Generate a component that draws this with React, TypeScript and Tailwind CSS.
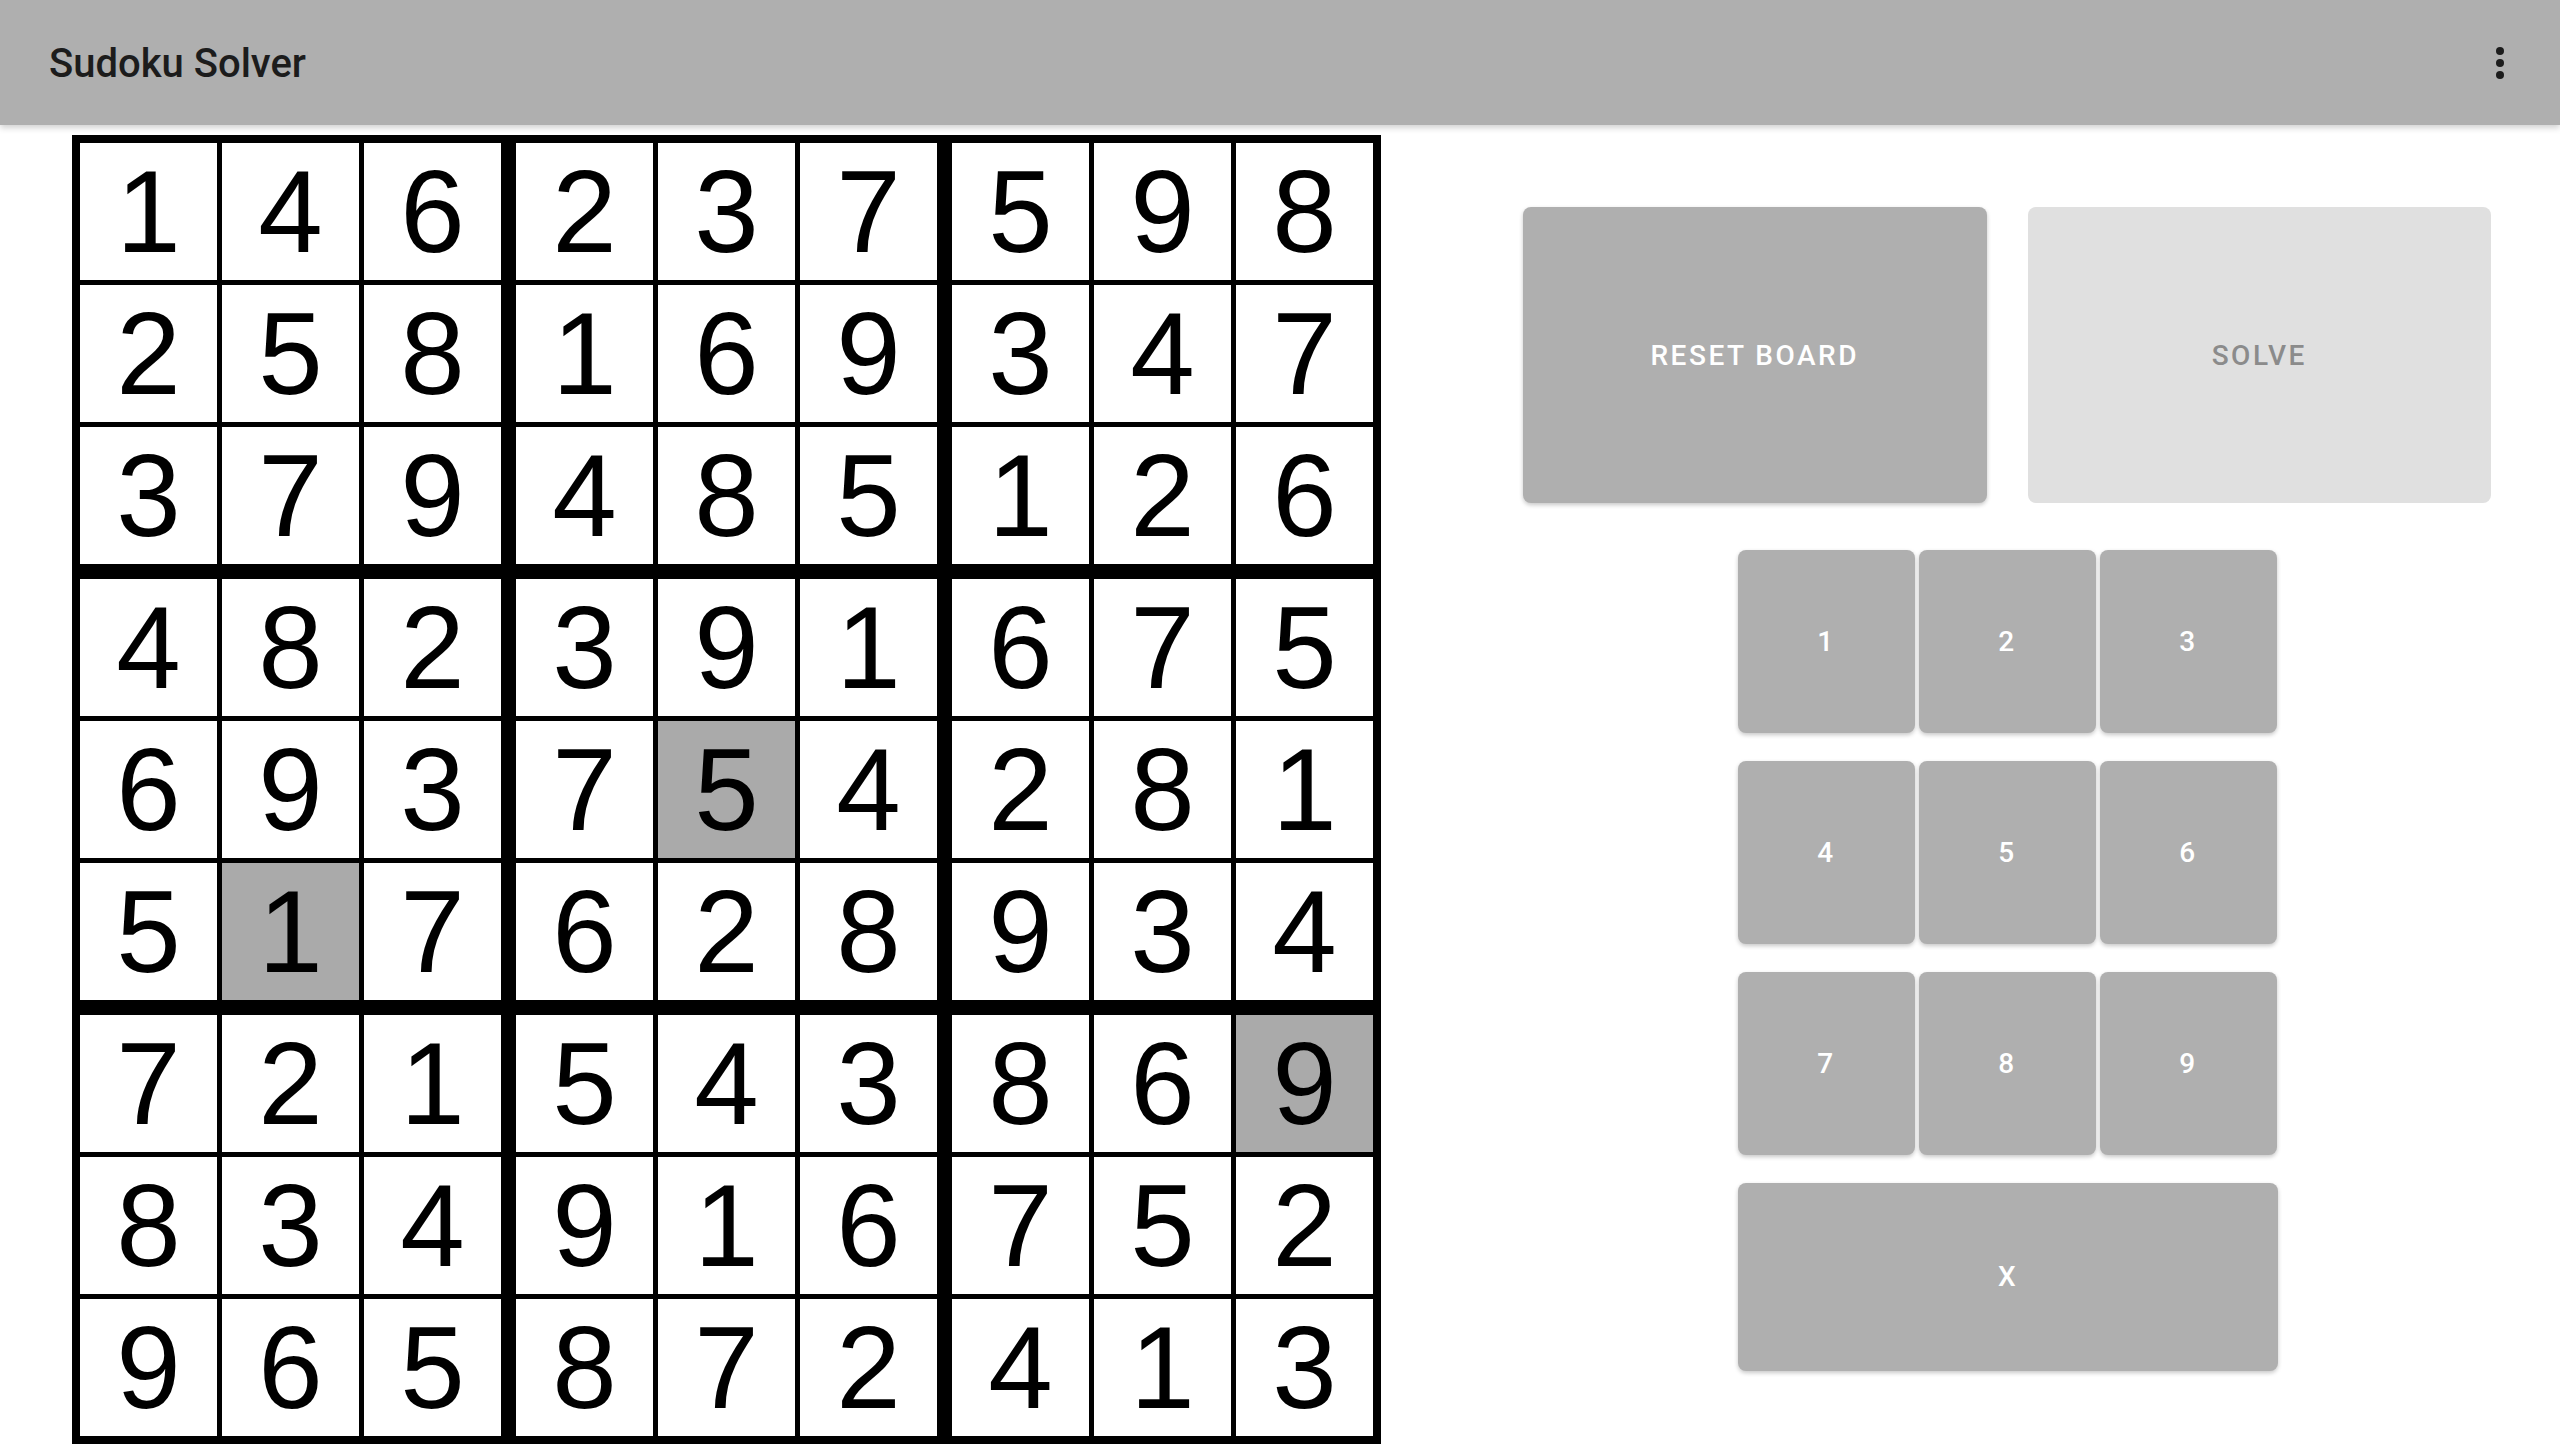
import React from "react";

const board = [
  [1, 4, 6, 2, 3, 7, 5, 9, 8],
  [2, 5, 8, 1, 6, 9, 3, 4, 7],
  [3, 7, 9, 4, 8, 5, 1, 2, 6],
  [4, 8, 2, 3, 9, 1, 6, 7, 5],
  [6, 9, 3, 7, 5, 4, 2, 8, 1],
  [5, 1, 7, 6, 2, 8, 9, 3, 4],
  [7, 2, 1, 5, 4, 3, 8, 6, 9],
  [8, 3, 4, 9, 1, 6, 7, 5, 2],
  [9, 6, 5, 8, 7, 2, 4, 1, 3],
];

const highlighted = ["4-4", "5-1", "6-8"];

const TopBar = () => (
  <div className="relative z-10 flex h-[125px] items-center justify-between bg-[#afafaf] pl-[49px] pr-[36px] shadow-[0_3px_6px_rgba(0,0,0,0.18)]">
    <h1 className="pt-[2px] text-[40px] font-medium text-[#1c1c1c]" style={{ fontFamily: "Roboto, sans-serif" }}>
      Sudoku Solver
    </h1>
    <svg width="48" height="48" viewBox="0 0 48 48" fill="#1c1c1c">
      <circle cx="24" cy="12" r="4" />
      <circle cx="24" cy="24" r="4" />
      <circle cx="24" cy="36" r="4" />
    </svg>
  </div>
);

const Box = ({ br, bc }: { br: number; bc: number }) => (
  <div className="grid grid-cols-3 gap-[5px]">
    {[0, 1, 2].map((r) =>
      [0, 1, 2].map((c) => {
        const row = br * 3 + r;
        const col = bc * 3 + c;
        const hl = highlighted.includes(`${row}-${col}`);
        return (
          <div
            key={`${r}-${c}`}
            className={`flex h-[137px] w-[137px] items-center justify-center text-[116px] leading-none text-black ${
              hl ? "bg-[#aaaaaa]" : "bg-white"
            }`}
            style={{ fontFamily: '"Liberation Sans", Arial, sans-serif' }}
          >
            {board[row][col]}
          </div>
        );
      })
    )}
  </div>
);

const Board = () => (
  <div className="grid grid-cols-3 gap-[15px] bg-black p-[8px]">
    {[0, 1, 2].map((br) => [0, 1, 2].map((bc) => <Box key={`${br}-${bc}`} br={br} bc={bc} />))}
  </div>
);

const Key = ({ label, wide }: { label: string; wide?: boolean }) => (
  <button
    className={`flex items-center justify-center rounded-[8px] bg-[#afafaf] text-[28px] font-medium tracking-[2.5px] text-white shadow-[0_2px_4px_rgba(0,0,0,0.22)] ${
      wide ? "h-[188px] w-[540px]" : "h-[183px] w-[177px]"
    }`}
  >
    {label}
  </button>
);

export default function App() {
  return (
    <div className="h-[1446px] w-[2560px] overflow-hidden bg-white" style={{ fontFamily: "Roboto, sans-serif" }}>
      <TopBar />
      <div className="flex">
        <div className="ml-[72px] mt-[10px]">
          <Board />
        </div>
        <div className="ml-[142px] mt-[82px] flex w-[968px] flex-col">
          <div className="flex gap-[41px]">
            <button className="flex h-[296px] w-[464px] items-center justify-center rounded-[8px] bg-[#afafaf] pt-[2px] text-[28px] font-medium tracking-[2.5px] text-white shadow-[0_2px_4px_rgba(0,0,0,0.22)]">
              RESET BOARD
            </button>
            <button className="flex h-[296px] w-[464px] items-center justify-center rounded-[8px] bg-[#e0e0e0] pt-[2px] text-[28px] font-medium tracking-[2.5px] text-[#8b8b8b]">
              SOLVE
            </button>
          </div>
          <div className="ml-[215px] mt-[47px] flex w-[540px] flex-col gap-[28px]">
            {[
              ["1", "2", "3"],
              ["4", "5", "6"],
              ["7", "8", "9"],
            ].map((row) => (
              <div key={row[0]} className="flex gap-[4px]">
                {row.map((n) => (
                  <Key key={n} label={n} />
                ))}
              </div>
            ))}
            <Key label="X" wide />
          </div>
        </div>
      </div>
    </div>
  );
}
